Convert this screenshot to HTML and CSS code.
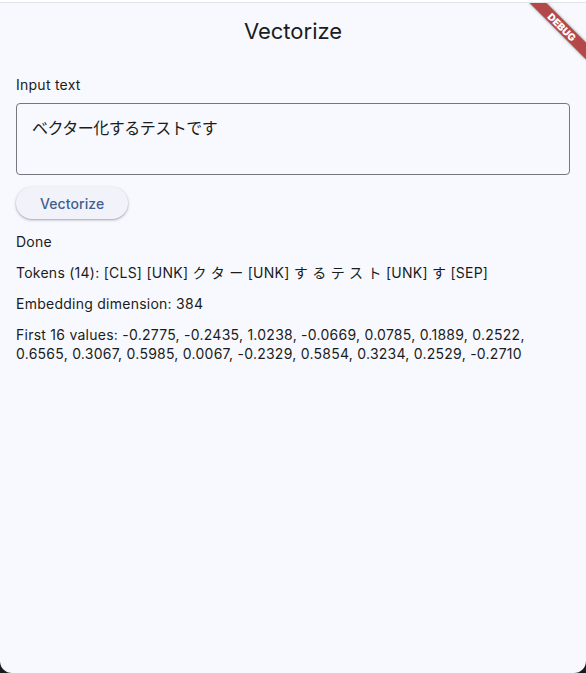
FILE: index.html
```html
<!DOCTYPE html>
<html lang="ja">

<head>
    <meta charset="UTF-8">
    <meta name="viewport" content="width=device-width, initial-scale=1.0">
    <title>Vectorize</title>
    <link rel="stylesheet" href="styles.css">
</head>

<body>
    <div class="window">
        <div class="window-edge"></div>
        <div class="app">
            <header class="appbar">
                <h1>Vectorize</h1>
            </header>

            <main class="content">
                <div class="field">
                    <label for="input">Input text</label>
                    <textarea id="input" rows="2">ベクター化するテストです</textarea>
                </div>

                <div class="actions">
                    <button type="button" class="btn">Vectorize</button>
                </div>

                <div class="result">
                    <p>Done</p>
                    <p>Tokens (14): [CLS] [UNK] ク タ ー [UNK] す る テ ス ト [UNK] す [SEP]</p>
                    <p>Embedding dimension: 384</p>
                    <p>First 16 values: -0.2775, -0.2435, 1.0238, -0.0669, 0.0785, 0.1889, 0.2522, 0.6565, 0.3067, 0.5985, 0.0067, -0.2329, 0.5854, 0.3234, 0.2529, -0.2710</p>
                </div>
            </main>

            <div class="debug-banner">DEBUG</div>
        </div>
    </div>
</body>

</html>
```

FILE: styles.css
```css
* {
    box-sizing: border-box;
}

html,
body {
    margin: 0;
    height: 100%;
}

body {
    background-color: #1b1b1d;
    font-family: Inter, "Noto Sans", "Noto Sans CJK JP", sans-serif;
    color: #1a1c20;
}

.window {
    height: 100%;
    display: flex;
    flex-direction: column;
    border-radius: 0 0 12px 12px;
    overflow: hidden;
    background-color: #f8f9ff;
}

/* thin strip left over from the title bar */
.window-edge {
    height: 2px;
    background-color: #fff;
    border-bottom: 1px solid #e2e3e8;
    box-sizing: content-box;
}

.app {
    position: relative;
    flex: 1;
    overflow: hidden;
}

.appbar {
    height: 56px;
    display: flex;
    align-items: center;
    justify-content: center;
}

.appbar h1 {
    margin: 0;
    font-size: 22px;
    font-weight: 400;
    line-height: 28px;
}

.content {
    padding: 16px;
    display: flex;
    flex-direction: column;
    gap: 12px;
}

.field {
    display: flex;
    flex-direction: column;
    gap: 8px;
}

.field label {
    font-size: 14px;
    line-height: 20px;
    letter-spacing: 0.25px;
}

.field textarea {
    height: 72px;
    padding: 12px 15px;
    border: 1px solid #74777f;
    border-radius: 4px;
    background: transparent;
    font-family: Inter, "Noto Sans CJK JP", sans-serif;
    font-size: 16px;
    line-height: 24px;
    letter-spacing: -0.5px;
    color: #1a1c20;
    resize: none;
    outline: none;
}

.actions {
    margin-bottom: 1px;
}

.btn {
    height: 32px;
    padding: 0 24px;
    border: none;
    border-radius: 16px;
    background-color: #f2f3fa;
    color: #3f5f90;
    font-family: Inter, sans-serif;
    font-size: 14px;
    font-weight: 500;
    letter-spacing: 0.1px;
    box-shadow: 0 1px 2px rgba(0, 0, 0, 0.25), 0 1px 3px 1px rgba(0, 0, 0, 0.08);
}

.result {
    display: flex;
    flex-direction: column;
    gap: 12px;
}

.result p {
    margin: 0;
    font-size: 14px;
    line-height: 19px;
    letter-spacing: 0.25px;
}

/* corner ribbon, rotated across the top right */
.debug-banner {
    position: absolute;
    top: 18px;
    right: -16px;
    width: 80px;
    height: 12px;
    transform: rotate(45deg);
    background-color: rgba(168, 40, 40, 0.85);
    box-shadow: 0 0 3px rgba(0, 0, 0, 0.4);
    color: #fff;
    font-family: Inter, sans-serif;
    font-size: 10px;
    font-weight: 900;
    line-height: 12px;
    text-align: center;
}
```
